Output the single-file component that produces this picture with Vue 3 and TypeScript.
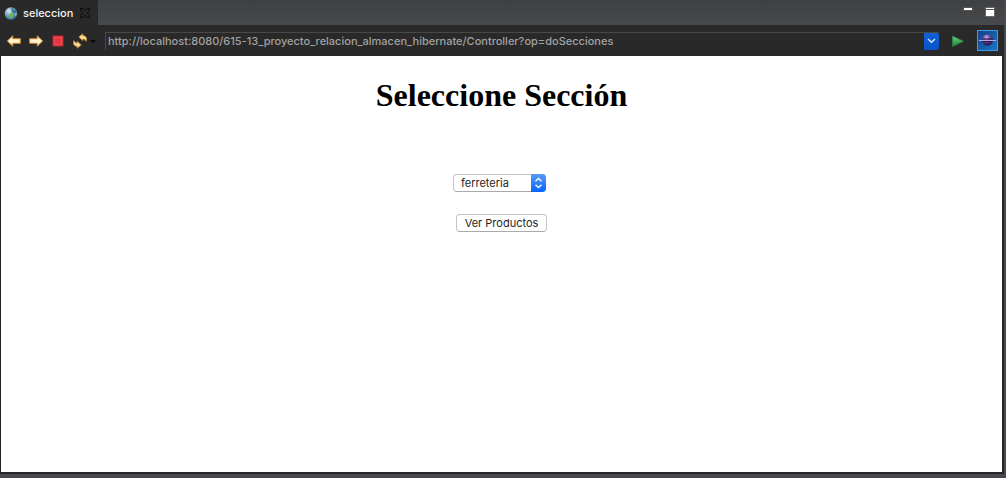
<script setup lang="ts">
import { ref } from 'vue'

const url = ref('http://localhost:8080/615-13_proyecto_relacion_almacen_hibernate/Controller?op=doSecciones')
const section = ref('ferreteria')
const sections = ['ferreteria']
</script>

<template>
  <div class="workbench">
    <header class="tabs">
      <div class="tab">
        <svg class="globe" width="14" height="14" viewBox="0 0 14 14" aria-hidden="true">
          <defs>
            <radialGradient id="sea" cx="0.35" cy="0.3" r="0.8">
              <stop offset="0" stop-color="#dcebf2" />
              <stop offset="0.4" stop-color="#7fadc8" />
              <stop offset="1" stop-color="#235b91" />
            </radialGradient>
          </defs>
          <circle cx="7" cy="7.5" r="6.3" fill="url(#sea)" />
          <path d="M7.5 2L10 2L12.5 5L11.5 7.5L9 7L7.5 5Z" fill="#35719d" />
          <path d="M6.5 7L9 7.5L9.5 10L7.5 13L6.2 11.5L5.5 9Z" fill="#75b455" />
          <path d="M8.5 2L11 3.3L9.5 4.5Z M11 7.5L13 7L12 10L10.8 9.5Z" fill="#a3b67b" />
        </svg>
        <span class="title">seleccion</span>
        <button class="icon" aria-label="Close tab">
          <svg width="12" height="12" viewBox="0 0 12 12">
            <path d="M1.5 1.5H4L6 3.8L8 1.5H10.5V3.5L8.2 6L10.5 8.5V10.5H8L6 8.2L4 10.5H1.5V8.5L3.8 6L1.5 3.5Z" fill="#292929" stroke="#080808" />
          </svg>
        </button>
      </div>
      <div class="window-actions">
        <button class="icon" aria-label="Minimize">
          <svg width="10" height="12" viewBox="0 0 10 12"><path d="M.5 2.5H9.5V5.5H.5Z" fill="#fff" stroke="#555" /></svg>
        </button>
        <button class="icon" aria-label="Maximize">
          <svg width="10" height="12" viewBox="0 0 10 12"><path d="M.5 2.5H9.5V11.5H.5Z" fill="#fff" stroke="#666" /><path d="M1 4.5H9" stroke="#555" /></svg>
        </button>
      </div>
    </header>

    <nav class="toolbar">
      <button class="icon" aria-label="Back">
        <svg width="16" height="14" viewBox="0 0 16 14"><path d="M1.3 7L6.8 1.8V4.7H14.3V9.3H6.8V12.2Z" fill="#fff3cf" stroke="#d08a2c" stroke-linejoin="round" /></svg>
      </button>
      <button class="icon" aria-label="Forward">
        <svg width="16" height="14" viewBox="0 0 16 14"><path d="M14.7 7L9.2 1.8V4.7H1.7V9.3H9.2V12.2Z" fill="#fff3cf" stroke="#d08a2c" stroke-linejoin="round" /></svg>
      </button>
      <button class="icon" aria-label="Stop">
        <svg width="16" height="14" viewBox="0 0 16 14"><rect x="3" y="2" width="10" height="10" fill="#e23540" stroke="#c32a35" /><path d="M4.5 10.5V3.5H11.5V10.5Z" fill="none" stroke="#ee535c" /></svg>
      </button>
      <button class="icon refresh" aria-label="Refresh">
        <svg width="24" height="16" viewBox="0 0 24 16">
          <g fill="#fbdc91" stroke="#c98a32" stroke-width=".7" stroke-linejoin="round">
            <path d="M6.8 4L10.8 .8V2.6C14 2.8 15.2 5 14.2 8.4C13 6.6 12.4 6 10.8 6V7.8Z" />
            <path d="M9.2 12L5.2 15.2V13.4C2 13.2 .8 11 1.8 7.6C3 9.4 3.6 10 5.2 10V8.2Z" />
          </g>
          <path d="M18 7H24L21 10.5Z" fill="#0b0b0b" />
        </svg>
      </button>
      <div class="address">
        <input v-model="url" type="text" aria-label="Address" spellcheck="false" />
        <button class="history" aria-label="Address history">
          <svg width="15" height="16" viewBox="0 0 15 16"><path d="M4 6L7.5 9.2L11 6" fill="none" stroke="#dce8fa" stroke-width="1.4" /></svg>
        </button>
      </div>
      <button class="icon" aria-label="Go">
        <svg width="14" height="14" viewBox="0 0 14 14">
          <defs><linearGradient id="go" x2="0" y2="1"><stop stop-color="#70c785" /><stop offset=".5" stop-color="#41ae58" /><stop offset="1" stop-color="#197e35" /></linearGradient></defs>
          <path d="M1.5 2L12.5 7.3L1.5 12.6Z" fill="url(#go)" stroke="#258843" stroke-width=".7" />
        </svg>
      </button>
      <button class="icon browser" aria-label="Web browser">
        <svg width="21" height="21" viewBox="0 0 21 21">
          <defs>
            <linearGradient id="tile" x2="1" y2="1"><stop stop-color="#123f86" /><stop offset="1" stop-color="#1c78c8" /></linearGradient>
            <radialGradient id="planet" cx=".4" cy=".25" r=".75"><stop stop-color="#cdb4e2" /><stop offset=".4" stop-color="#6c4c9c" /><stop offset="1" stop-color="#21154f" /></radialGradient>
          </defs>
          <rect x=".5" y=".5" width="20" height="20" fill="url(#tile)" stroke="#419bea" />
          <circle cx="10.5" cy="10" r="5.5" fill="url(#planet)" />
          <path d="M5.5 9H15.5" stroke="#2b1a58" />
          <path d="M2 10.5H19" stroke="#b7a5dc" />
          <path d="M5.5 11.5H15.5" stroke="#2b1a58" />
        </svg>
      </button>
    </nav>

    <main class="page">
      <h1>Seleccione Sección</h1>
      <form @submit.prevent>
        <div class="picker">
          <select v-model="section" aria-label="Sección">
            <option v-for="item in sections" :key="item" :value="item">{{ item }}</option>
          </select>
          <svg class="stepper" width="15" height="18" viewBox="0 0 15 18" aria-hidden="true">
            <defs><linearGradient id="blue" x2="0" y2="1"><stop stop-color="#589bf9" /><stop offset="1" stop-color="#0764ff" /></linearGradient></defs>
            <path d="M0 0H11Q15 0 15 4V14Q15 18 11 18H0Z" fill="url(#blue)" />
            <path d="M4.5 7.2L7.5 4.5L10.5 7.2M4.5 10.8L7.5 13.5L10.5 10.8" fill="none" stroke="#fff" stroke-width="1.4" />
          </svg>
        </div>
        <button class="submit" type="submit">Ver Productos</button>
      </form>
    </main>
  </div>
</template>

<style>
body {
  margin: 0;
  background: #47494c;
}
</style>

<style scoped>
.workbench {
  box-sizing: border-box;
  display: flex;
  flex-direction: column;
  min-height: 100vh;
  padding: 0 2px 4px 0;
  background: #47494c;
  font-family: Inter, "Liberation Sans", sans-serif;
  font-size: 11px;
}

button {
  font: inherit;
}

.icon {
  display: flex;
  padding: 0;
  border: 0;
  background: none;
}

.tabs {
  display: flex;
  justify-content: space-between;
  height: 25px;
  background: linear-gradient(#3e4042, #48494b);
}

.tab {
  display: flex;
  align-items: center;
  gap: 5px;
  padding: 0 7px 0 4px;
  background: #292929;
  color: #f4f4f4;
}

.title {
  margin-right: 1px;
  font-weight: 500;
}

.window-actions {
  display: flex;
  align-items: flex-start;
  gap: 12px;
  padding: 5px 9px 0 0;
}

.toolbar {
  display: flex;
  align-items: center;
  gap: 6px;
  height: 31px;
  padding: 0 6px;
  box-sizing: border-box;
  background: #292929;
}

.refresh {
  margin-right: 3px;
}

.address {
  display: flex;
  flex: 1;
  height: 17px;
  margin-right: 6px;
  border-top: 1px solid #484848;
  border-left: 1px solid #484848;
}

.address input {
  flex: 1;
  min-width: 0;
  padding: 0 2px;
  border: 0;
  outline: 0;
  background: transparent;
  color: #a2a2a2;
  font: inherit;
  font-weight: 500;
}

.history {
  display: flex;
  padding: 0;
  border: 0;
  border-radius: 0 3px 3px 0;
  background: linear-gradient(#1260d8, #0953c8);
}

.browser {
  margin-left: 6px;
}

.page {
  flex: 1;
  padding: 19px 0;
  border: 2px solid #252525;
  border-width: 0 2px 2px 1px;
  background: #fff;
  color: #000;
  text-align: center;
}

h1 {
  margin: 0;
  font: bold 32px/40px "Liberation Serif", serif;
}

form {
  display: flex;
  flex-direction: column;
  align-items: center;
  gap: 22px;
  padding-top: 59px;
}

.picker {
  display: grid;
  width: 93px;
  margin-right: 4px;
}

.picker select,
.stepper {
  grid-area: 1 / 1;
}

.picker select,
.submit {
  box-sizing: border-box;
  height: 18px;
  border: 1px solid #c4c4c4;
  border-bottom-color: #aaa;
  border-radius: 4px;
  background: #fff;
  color: #262626;
  font: 11px/16px Inter, "Liberation Sans", sans-serif;
}

.picker select {
  padding: 0 16px 0 7px;
  appearance: none;
}

.stepper {
  justify-self: end;
  pointer-events: none;
}

.submit {
  padding: 0 8px;
}
</style>
